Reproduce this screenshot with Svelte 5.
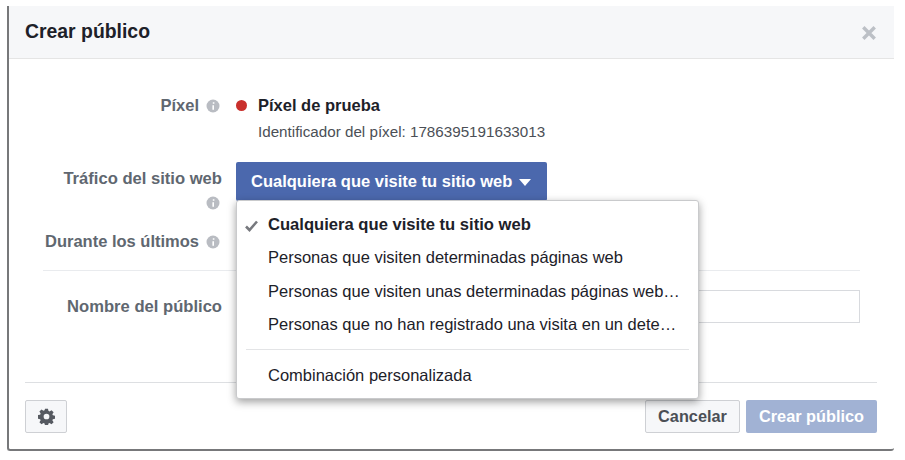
<script>
  const items = [
    { text: 'Personas que visiten determinadas páginas web' },
    { text: 'Personas que visiten unas determinadas páginas web…' },
    { text: 'Personas que no han registrado una visita en un dete…' }
  ];
</script>

<div class="modal">
  <header class="head">
    <h1>Crear público</h1>
    <svg class="close" viewBox="0 0 14 14" aria-hidden="true"><path d="M2 2L12 12M12 2L2 12" /></svg>
  </header>

  <div class="body">
    <div class="row pixel">
      <div class="label"><span>Píxel</span><svg class="info" viewBox="0 0 14 14"><circle cx="7" cy="7" r="6.5" /><path d="M7.6 3.2v1.6M7.2 6.2v4.6" /></svg></div>
      <div class="value">
        <div class="pixname"><i class="dot"></i><b>Píxel de prueba</b></div>
        <div class="pixid">Identificador del píxel: 1786395191633013</div>
      </div>
    </div>

    <div class="row traffic">
      <div class="label wrap"><span>Tráfico del sitio web</span><svg class="info" viewBox="0 0 14 14"><circle cx="7" cy="7" r="6.5" /><path d="M7.6 3.2v1.6M7.2 6.2v4.6" /></svg></div>
      <div class="value">
        <button class="primary">Cualquiera que visite tu sitio web<i class="caret"></i></button>
      </div>
    </div>

    <div class="row during">
      <div class="label"><span>Durante los últimos</span><svg class="info" viewBox="0 0 14 14"><circle cx="7" cy="7" r="6.5" /><path d="M7.6 3.2v1.6M7.2 6.2v4.6" /></svg></div>
    </div>

    <hr class="sep" />

    <div class="row name">
      <div class="label plain"><span>Nombre del público</span></div>
      <div class="input"></div>
    </div>
  </div>

  <footer class="foot">
    <button class="btn gear" aria-label="Ajustes">
      <svg viewBox="0 0 16 16"><path fill-rule="evenodd" d="M6.6 0.6h2.8l.4 2.1 1.1.5 1.8-1.2 2 2-1.2 1.8.5 1.1 2.1.4v2.8l-2.1.4-.5 1.1 1.2 1.8-2 2-1.8-1.2-1.1.5-.4 2.1H6.6l-.4-2.1-1.1-.5-1.8 1.2-2-2 1.2-1.8-.5-1.1-2.1-.4V6.700l2.100-.4.5-1.100-1.200-1.800 2-2 1.800 1.200 1.100-.5zM8 5.300a2.700 2.700 0 1 0 0 5.400 2.700 2.700 0 0 0 0-5.400z"/></svg>
    </button>
    <div class="actions">
      <button class="btn cancel">Cancelar</button>
      <button class="btn create">Crear público</button>
    </div>
  </footer>

  <div class="menu">
    <div class="item sel">
      <svg class="check" viewBox="0 0 13 12"><path d="M1 6.500L4.500 10L12 1.500" /></svg>
      Cualquiera que visite tu sitio web
    </div>
    {#each items as it}
      <div class="item">{it.text}</div>
    {/each}
    <div class="msep"></div>
    <div class="item">Combinación personalizada</div>
  </div>
</div>

<style>
  :global(body) {
    margin: 0;
    background: #fff;
    font-family: "Liberation Sans", Arial, sans-serif;
  }
  .modal {
    position: relative;
    box-sizing: border-box;
    width: 887px;
    height: 445px;
    margin: 6px 0 0 7px;
    background: #fff;
    border-left: 2px solid #77787a;
    border-bottom: 2px solid #77787a;
    border-bottom-left-radius: 3px;
    border-bottom-right-radius: 3px;
    display: flex;
    flex-direction: column;
    color: #1d2129;
  }
  .head {
    height: 53px;
    box-sizing: border-box;
    background: #f6f7f9;
    border-bottom: 1px solid #e5e5e5;
    display: flex;
    align-items: center;
    justify-content: space-between;
    padding: 0 17px 2px 16px;
    flex: none;
  }
  h1 {
    margin: 0;
    font-size: 19.4px;
    font-weight: 700;
    color: #1d2129;
  }
  .close {
    width: 16px;
    height: 16px;
    margin-top: 3px;
  }
  .close path {
    stroke: #bcc0c6;
    stroke-width: 3;
    fill: none;
  }
  .body {
    flex: 1;
    padding: 37px 34px 0 32px;
    min-height: 0;
  }
  .row {
    display: flex;
    align-items: flex-start;
  }
  .label {
    width: 179px;
    flex: none;
    display: flex;
    justify-content: flex-end;
    align-items: center;
    gap: 7px;
    font-size: 16.5px;
    font-weight: 700;
    color: #606770;
  }
  .label.wrap {
    flex-wrap: wrap;
    row-gap: 7px;
    padding-top: 7px;
    font-size: 16.6px;
  }
  .label.wrap span {
    flex: none;
    width: 100%;
    text-align: right;
    margin-right: -2px;
    white-space: nowrap;
  }
  .label.plain { font-size: 16.6px; }
  .label.plain span { margin-right: -2px; }
  .info {
    width: 14px;
    height: 14px;
    flex: none;
  }
  .info circle { fill: #b9bcc2; }
  .info path { stroke: #fff; stroke-width: 1.6; fill: none; }
  .value { margin-left: 16px; }
  .pixel { height: 66px; }
  .pixname {
    display: flex;
    align-items: center;
    line-height: 20px;
    margin-top: -1px;
  }
  .pixname b { font-size: 16.5px; }
  .dot {
    width: 11px;
    height: 11px;
    border-radius: 50%;
    background: #c9302c;
    margin-right: 11px;
  }
  .pixid {
    margin: 8px 0 0 22px;
    font-size: 15.2px;
    line-height: 18px;
    color: #4b4f56;
  }
  .traffic { height: 70px; }
  .primary {
    display: flex;
    align-items: center;
    box-sizing: border-box;
    width: 311px;
    height: 39px;
    padding: 0 15px;
    background: #4b68ad;
    border: 0;
    border-radius: 2px;
    color: #fff;
    font: 700 16.5px "Liberation Sans", Arial, sans-serif;
    white-space: nowrap;
  }
  .caret {
    width: 0;
    height: 0;
    margin: 1px 0 0 7px;
    border-left: 6.5px solid transparent;
    border-right: 6.5px solid transparent;
    border-top: 7px solid #fff;
  }
  .during { height: 38px; }
  .sep {
    border: 0;
    border-top: 1px solid #e9ebee;
    margin: 0 0 0 2px;
  }
  .name {
    margin-top: 19px;
    align-items: center;
  }
  .input {
    margin-left: 16px;
    flex: 1;
    height: 33px;
    box-sizing: border-box;
    border: 1px solid #d8dade;
  }
  .foot {
    margin: 0 17px 0 16px;
    height: 67px;
    box-sizing: border-box;
    border-top: 1px solid #dddfe2;
    padding-top: 17px;
    display: flex;
    justify-content: space-between;
    align-items: flex-start;
    flex: none;
  }
  .actions { display: flex; gap: 6px; }
  .btn {
    height: 33px;
    box-sizing: border-box;
    border-radius: 2px;
    font: 700 16.3px "Liberation Sans", Arial, sans-serif;
    padding: 0;
  }
  .gear, .cancel {
    background: #f6f7f9;
    border: 1px solid #ced0d4;
    color: #4b4f56;
  }
  .gear {
    width: 42px;
    display: flex;
    align-items: center;
    justify-content: center;
  }
  .gear svg { width: 17px; height: 17px; fill: #565a61; }
  .cancel { width: 95px; }
  .create {
    width: 131px;
    background: #a1b2d4;
    border: 0;
    color: #fff;
  }
  .menu {
    position: absolute;
    left: 227px;
    top: 194px;
    width: 463px;
    height: 199px;
    box-sizing: border-box;
    padding-top: 7px;
    background: #fff;
    border: 1px solid #c9cacc;
    border-radius: 3px;
    box-shadow: 0 3px 9px rgba(0, 0, 0, 0.38);
  }
  .item {
    position: relative;
    height: 33.4px;
    line-height: 33.4px;
    padding-left: 31px;
    font-size: 16.5px;
    color: #1d2129;
    white-space: nowrap;
  }
  .item.sel { font-weight: 700; font-size: 16.6px; }
  .check {
    position: absolute;
    left: 8px;
    top: 12px;
    width: 13px;
    height: 12px;
  }
  .check path { stroke: #77797e; stroke-width: 2.6; fill: none; }
  .msep {
    height: 1px;
    margin: 7px 9px 9px 9px;
    background: #e3e4e6;
  }
</style>
